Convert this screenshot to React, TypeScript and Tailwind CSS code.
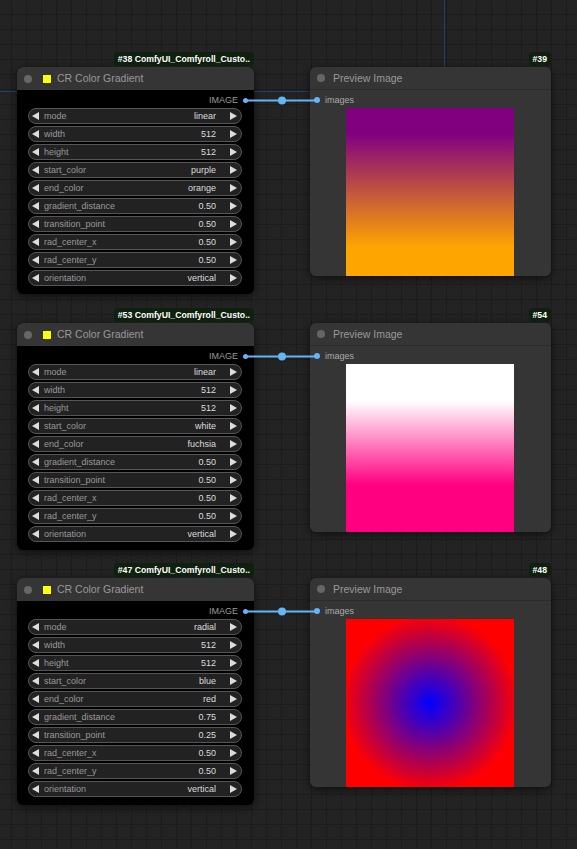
const gradients = [
  {
    id: 38,
    previewId: 39,
    mode: "linear",
    start: "purple",
    end: "orange",
    distance: "0.50",
    transition: "0.50",
    image: "bg-[linear-gradient(to_bottom,#800080_15%,#ffa500_83%)]",
  },
  {
    id: 53,
    previewId: 54,
    mode: "linear",
    start: "white",
    end: "fuchsia",
    distance: "0.50",
    transition: "0.50",
    image: "bg-[linear-gradient(to_bottom,#ffffff_22%,#ff0080_72%)]",
  },
  {
    id: 47,
    previewId: 48,
    mode: "radial",
    start: "blue",
    end: "red",
    distance: "0.75",
    transition: "0.25",
    image: "bg-[radial-gradient(circle_at_center,#0000ff_0px,#ff0000_88px)]",
  },
];

const rowTops = ["top-[52px]", "top-[308px]", "top-[563px]"];

function Arrow({ dir }: { dir: "left" | "right" }) {
  return (
    <svg width="7" height="8" viewBox="0 0 7 8" className="shrink-0">
      {dir === "left" ? (
        <polygon points="7,0 7,8 0,4" fill="#dddddd" />
      ) : (
        <polygon points="0,0 0,8 7,4" fill="#dddddd" />
      )}
    </svg>
  );
}

function Widget({ label, value }: { label: string; value: string }) {
  return (
    <div className="h-[16px] rounded-full border border-[#555] bg-[#222] flex items-center pl-[3px] pr-[4px]">
      <Arrow dir="left" />
      <span className="ml-[5px] flex-1 text-[9px] text-[#999] leading-none truncate">{label}</span>
      <span className="text-[9px] text-[#ddd] leading-none">{value}</span>
      <span className="ml-[14px]">
        <Arrow dir="right" />
      </span>
    </div>
  );
}

function Badge({ children }: { children: string }) {
  return (
    <div className="flex justify-end h-[14px] mb-[1px]">
      <span className="h-[14px] rounded-[4px] bg-[#0f200f] px-[4px] text-[8.7px] font-bold text-white leading-[14px] whitespace-nowrap">
        {children}
      </span>
    </div>
  );
}

function GradientNode({ g }: { g: (typeof gradients)[number] }) {
  const widgets: [string, string][] = [
    ["mode", g.mode],
    ["width", "512"],
    ["height", "512"],
    ["start_color", g.start],
    ["end_color", g.end],
    ["gradient_distance", g.distance],
    ["transition_point", g.transition],
    ["rad_center_x", "0.50"],
    ["rad_center_y", "0.50"],
    ["orientation", "vertical"],
  ];

  return (
    <div className="w-[237px] shrink-0">
      <Badge>{`#${g.id} ComfyUI_Comfyroll_Custo..`}</Badge>
      <div className="rounded-[6px] bg-black overflow-hidden shadow-[0_2px_8px_rgba(0,0,0,0.6)]">
        <div className="h-[23px] bg-[#353535] flex items-center pl-[7px]">
          <span className="w-[8px] h-[8px] rounded-full bg-[#666]" />
          <span className="ml-[10px] w-[10px] h-[10px] bg-[#ffff00] border border-[#333]" />
          <span className="ml-[5px] text-[10.5px] text-[#999] leading-none">CR Color Gradient</span>
        </div>
        <div className="pt-[2px] pb-[8px]">
          <div className="h-[16px] flex items-center justify-end pr-[6px]">
            <span className="text-[9px] text-[#999] leading-none">IMAGE</span>
            <span className="ml-[5px] w-[5px] h-[5px] rounded-full bg-[#64b5f6]" />
          </div>
          <div className="flex flex-col gap-[2px] pl-[11px] pr-[12px]">
            {widgets.map(([l, v]) => (
              <Widget key={l} label={l} value={v} />
            ))}
          </div>
        </div>
      </div>
    </div>
  );
}

function PreviewNode({ id, image }: { id: number; image: string }) {
  return (
    <div className="w-[241px] shrink-0">
      <Badge>{`#${id}`}</Badge>
      <div className="rounded-[6px] bg-[#353535] overflow-hidden shadow-[0_2px_8px_rgba(0,0,0,0.6)]">
        <div className="h-[23px] flex items-center pl-[7px] border-b border-[#2c2c2c]">
          <span className="w-[8px] h-[8px] rounded-full bg-[#666]" />
          <span className="ml-[8px] text-[10.5px] text-[#999] leading-none">Preview Image</span>
        </div>
        <div className="pt-[2px]">
          <div className="h-[16px] flex items-center pl-[4px]">
            <span className="w-[6px] h-[6px] rounded-full bg-[#64b5f6]" />
            <span className="ml-[5px] text-[9px] text-[#aaa] leading-none">images</span>
          </div>
          <div className="flex justify-center pr-[1px]">
            <div className={`w-[168px] h-[168px] ${image}`} />
          </div>
        </div>
      </div>
    </div>
  );
}

export default function App() {
  return (
    <div className="relative w-[577px] h-[849px] overflow-hidden bg-[#232323] bg-[linear-gradient(to_right,#1c1c1c_1px,transparent_1px),linear-gradient(to_bottom,#1c1c1c_1px,transparent_1px)] bg-size-[15px_15px] bg-position-[11px_14px] font-['Liberation_Sans',Arial,sans-serif]">
      {/* group frame edge */}
      <div className="absolute left-0 top-0 w-[445px] h-[92px] border-r border-b border-[#21406a]" />

      {gradients.map((g, i) => (
        <div key={g.id} className={`absolute left-[17px] ${rowTops[i]} flex items-start`}>
          <GradientNode g={g} />
          <div className="w-[56px] shrink-0" />
          <PreviewNode id={g.previewId} image={g.image} />

          {/* link */}
          <svg className="absolute left-[227px] top-[44px]" width="76" height="9" viewBox="0 0 76 9">
            <line x1="2" y1="4.5" x2="74" y2="4.5" stroke="#64b5f6" strokeWidth="2" />
            <circle cx="38" cy="4.5" r="4" fill="#64b5f6" />
          </svg>
        </div>
      ))}
    </div>
  );
}
